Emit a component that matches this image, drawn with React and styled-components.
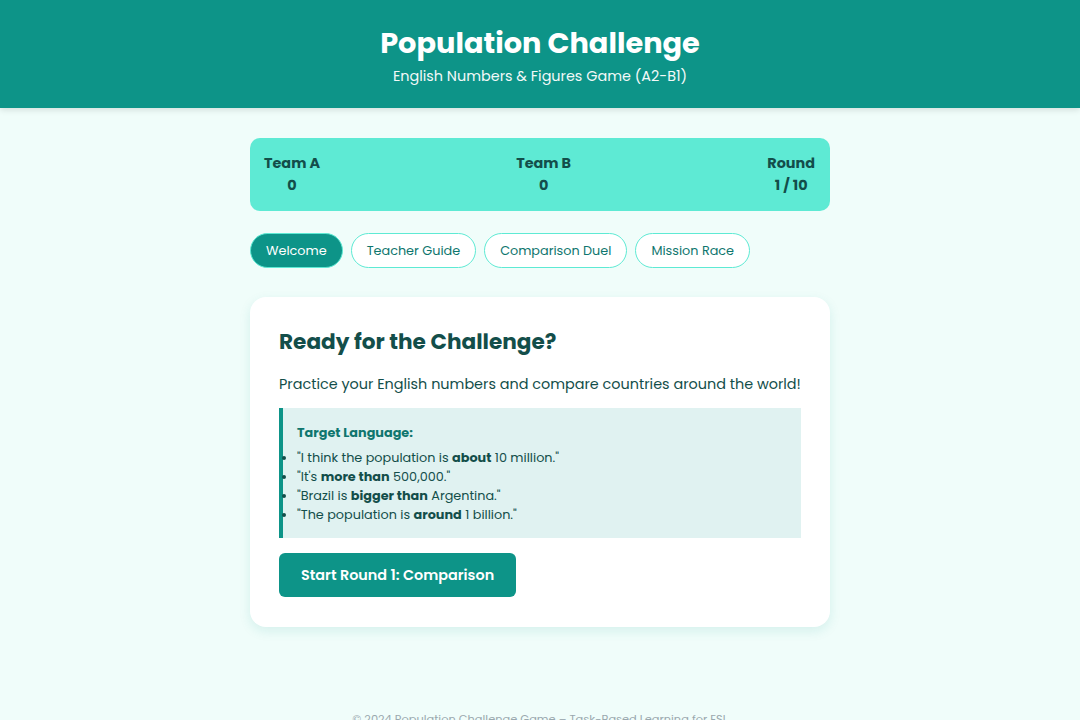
import React from 'react';
import styled, { createGlobalStyle } from 'styled-components';

const GlobalStyle = createGlobalStyle`
	* {
		box-sizing: border-box;
	}
	body {
		margin: 0;
		background-color: #f0fdfa;
		font-family: 'Poppins', 'Inter', 'Noto Sans', sans-serif;
		color: #134e4a;
	}
`;

const tabs = ['Welcome', 'Teacher Guide', 'Comparison Duel', 'Mission Race'];

const phrases = [
	['"I think the population is ', 'about', ' 10 million."'],
	['"It\'s ', 'more than', ' 500,000."'],
	['"Brazil is ', 'bigger than', ' Argentina."'],
	['"The population is ', 'around', ' 1 billion."'],
];

const App = () => {
	return (
		<>
			<GlobalStyle />
			<Header>
				<h1>Population Challenge</h1>
				<p>English Numbers &amp; Figures Game (A2-B1)</p>
			</Header>
			<Main>
				<ScoreBar>
					<ScoreItem>
						<span className='label'>Team A</span>
						<span className='value'>0</span>
					</ScoreItem>
					<ScoreItem>
						<span className='label'>Team B</span>
						<span className='value'>0</span>
					</ScoreItem>
					<ScoreItem>
						<span className='label'>Round</span>
						<span className='value'>1 / 10</span>
					</ScoreItem>
				</ScoreBar>
				<TabRow>
					{tabs.map((tab, index) => (
						<Tab key={tab} $active={index === 0}>
							{tab}
						</Tab>
					))}
				</TabRow>
				<Card>
					<h2>Ready for the Challenge?</h2>
					<p className='intro'>
						Practice your English numbers and compare countries around the world!
					</p>
					<TargetBox>
						<h3>Target Language:</h3>
						<ul>
							{phrases.map(([before, bold, after]) => (
								<li key={bold}>
									{before}
									<strong>{bold}</strong>
									{after}
								</li>
							))}
						</ul>
					</TargetBox>
					<StartButton>Start Round 1: Comparison</StartButton>
				</Card>
			</Main>
			<Footer>© 2024 Population Challenge Game – Task-Based Learning for ESL</Footer>
		</>
	);
};

const Header = styled.header`
	background-color: #0d9488;
	color: #ffffff;
	text-align: center;
	padding: 26px 20px 0;
	height: 108px;
	box-shadow: 0 2px 6px rgba(0, 0, 0, 0.12);
	h1 {
		margin: 0;
		font-size: 28.8px;
		font-weight: 700;
		line-height: 34px;
	}
	p {
		margin: 5px 0 0;
		font-size: 14.4px;
		line-height: 22px;
		opacity: 0.95;
	}
`;

const Main = styled.main`
	width: 580px;
	margin: 30px auto 0;
	display: flex;
	flex-direction: column;
`;

const ScoreBar = styled.div`
	background-color: #5eead4;
	border-radius: 10px;
	padding: 14px 15px 15px 14px;
	display: flex;
	justify-content: space-between;
	align-items: flex-start;
	height: 73px;
`;

const ScoreItem = styled.div`
	display: flex;
	flex-direction: column;
	align-items: center;
	font-weight: 700;
	color: #134e4a;
	.label,
	.value {
		font-size: 14.4px;
		line-height: 22px;
	}
`;

const TabRow = styled.nav`
	display: flex;
	gap: 8px;
	margin-top: 22px;
`;

const Tab = styled.button`
	font-family: inherit;
	font-size: 12.8px;
	height: 35px;
	padding: 0 15px;
	border-radius: 999px;
	border: 1px solid #5eead4;
	background-color: ${({ $active }) => ($active ? '#0d9488' : '#ffffff')};
	color: ${({ $active }) => ($active ? '#ffffff' : '#0f766e')};
	cursor: pointer;
`;

const Card = styled.section`
	margin-top: 29px;
	background-color: #ffffff;
	border-radius: 16px;
	padding: 29px 29px 30px;
	box-shadow: 0 4px 12px rgba(13, 148, 136, 0.12);
	display: flex;
	flex-direction: column;
	h2 {
		margin: 0;
		font-size: 21.6px;
		line-height: 32px;
		font-weight: 700;
		color: #134e4a;
	}
	.intro {
		margin: 15px 0 13px;
		font-size: 14.4px;
		line-height: 22px;
		color: #134e4a;
	}
`;

const TargetBox = styled.div`
	background-color: #e0f2f1;
	border-left: 4px solid #0d9488;
	padding: 15px 15px 14px 14px;
	h3 {
		margin: 0 0 5px;
		font-size: 12.8px;
		line-height: 20px;
		font-weight: 700;
		color: #0f766e;
	}
	ul {
		margin: 0;
		padding-left: 0;
	}
	li {
		font-size: 12.8px;
		line-height: 19px;
		color: #134e4a;
	}
	strong {
		font-weight: 700;
	}
`;

const StartButton = styled.button`
	align-self: flex-start;
	margin-top: 15px;
	height: 44px;
	padding: 0 22px;
	border: none;
	border-radius: 6px;
	background-color: #0d9488;
	color: #ffffff;
	font-family: inherit;
	font-size: 14.4px;
	font-weight: 600;
	cursor: pointer;
`;

const Footer = styled.footer`
	text-align: center;
	margin-top: 83px;
	font-size: 11.4px;
	line-height: 18px;
	color: #9aa8ae;
	padding-bottom: 20px;
`;

export default App;
